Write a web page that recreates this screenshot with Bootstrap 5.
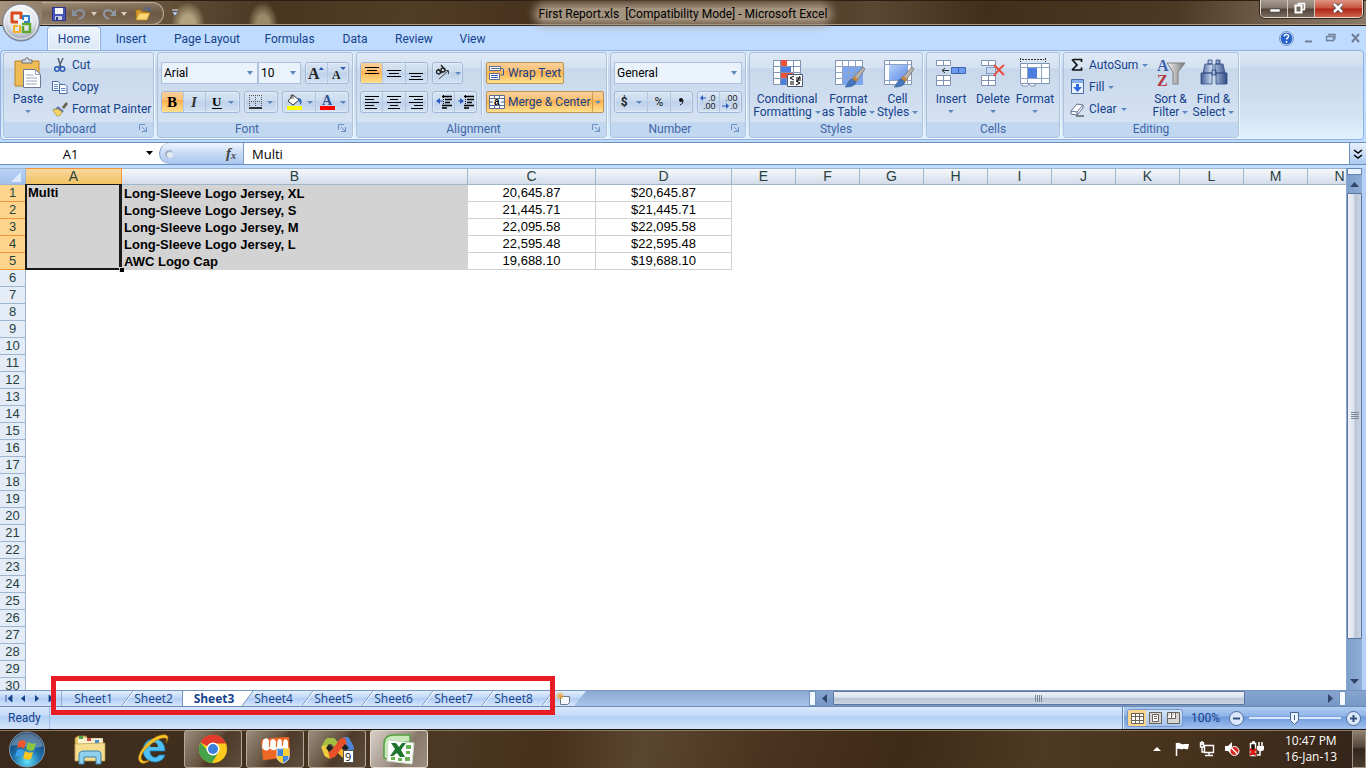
<!DOCTYPE html>
<html lang="en">
<head>
<meta charset="utf-8">
<meta name="viewport" content="width=device-width, initial-scale=1">
<title>First Report.xls [Compatibility Mode] - Microsoft Excel</title>
<link href="https://cdn.jsdelivr.net/npm/bootstrap@5.3.0/dist/css/bootstrap.min.css" rel="stylesheet">
<style>
:root{--ink:#15428b;--line:#9ebbde;--gold:linear-gradient(#f8cf9a 0,#fbc275 38%,#fdb04f 42%,#fee08c 100%)}
body{font:12px/16px Roboto,"Open Sans",sans-serif;color:var(--ink);background:#bfdbff;min-height:100vh;overflow:hidden}
button,select,input{font:inherit;color:inherit}
svg{display:block;flex:none}
.btn{--bs-btn-padding-x:0;--bs-btn-padding-y:0;--bs-btn-font-size:12px;--bs-btn-line-height:16px;--bs-btn-color:var(--ink);--bs-btn-border-width:0;--bs-btn-border-radius:2px;white-space:nowrap}
.caret{flex:none;width:0;height:0;border:3px solid transparent;border-top-color:#5c87bf;border-bottom:0}

/* title bar */
.titlebar{display:grid;grid-template-columns:1fr auto 1fr;height:26px;color:#000;border-bottom:1px solid #2a1c10;box-shadow:inset 0 -1px #a79a8b,inset 0 1px #2a1d12;
  background:radial-gradient(ellipse 17px 22px at 188px 24px,#c9b894cc 40%,transparent),radial-gradient(ellipse 15px 22px at 263px 24px,#b8a783bb 40%,transparent),linear-gradient(100deg,#a5937f 0,#7a634a 8%,#5e4a34 14%,#4a3520 20%,#523d26 30%,#46301c 41%,#4c3620 55%,#5a4631 64%,#432e1b 72%,#4d3823 86%,#766553 94%,#8a7a69 100%)}
.titlebar h1{font-size:12px;line-height:12px;font-weight:400;margin:8px 0 5px;white-space:pre;border-radius:8px;background:#a3937f;box-shadow:0 0 9px 5px #a3937f}
.quick{height:23px;margin:2px 0 0 42px;width:122px;padding:0 9px;border:1px solid #b9ab9b;border-left:0;border-radius:0 12px 12px 0;background:linear-gradient(#a8988680,#6d5b4780 50%,#8e7c6980)}
.orb{position:absolute;left:2px;top:3px;z-index:5}
.winbtns{height:18px;border:1px solid #e2d9d0;border-top:0;border-radius:0 0 5px 5px;overflow:hidden;margin-right:3px;box-shadow:0 0 0 1px #35261a}
.winbtns .btn{--bs-btn-border-radius:0;width:27px;height:17px;background:linear-gradient(#a89c90,#83756a 48%,#4f4136 52%,#76695d);border-right:1px solid #d3c8be}
.winbtns .close-win{width:47px;border-right:0;background:linear-gradient(#dc9685,#c9523c 48%,#ac2413 52%,#d0654d)}

/* ribbon */
.tabrow{height:24px;background:#bfdbff}
.tabrow .nav{padding-left:47px}
.tabrow .nav-link{color:var(--ink);font-size:12px;line-height:16px;padding:4px 0 0;height:22px;text-align:center;border:1px solid transparent;border-bottom:0;border-radius:4px 4px 0 0}
.tabrow .nav-link.active{height:24px;background:linear-gradient(#eef5fe,#dbe7f6);border-color:#8db2e3;box-shadow:inset 0 0 0 1px #f5faff}
.ribbon{height:90px;margin:0 2px 2px 0;padding:1px 2px;border:1px solid #8db2e3;border-radius:4px;background:linear-gradient(#dbe7f5 0,#d0deef 17%,#c5d6ea 19%,#d3e2f3 72%,#e0f2ff 100%)}
.rgroup{height:86px;border:1px solid #abc3df;border-radius:3px;margin-right:3px;flex:none;background:linear-gradient(#dfe9f6 0,#d5e2f1 17%,#c8d8eb 19%,#d5e2f2 82%);box-shadow:1px 1px #edf5fd;overflow:hidden}
.rbody{height:69px}
.rfoot{height:15px;line-height:15px;background:#c1d8f0;color:#4166a8;text-align:center;position:relative}
.rfoot .btn{position:absolute;right:4px;top:2px}
.rows{padding:9px 3px 0;gap:7px}
.stack{padding-top:1px}
.tools{height:22px;border:1px solid #9fb8d9;border-radius:3px;background:linear-gradient(#d9e5f3,#c9daee 45%,#bed1e9 50%,#d2e1f3);box-shadow:inset 0 0 0 1px #ffffff55}
.tools .btn{height:20px;flex:1 1 0;border-radius:0;display:flex;align-items:center;justify-content:center;gap:4px;border-right:1px solid #b1c6e1}
.tools .btn:last-child{border-right:0}
.tools .hot{background:var(--gold)}
.rule{width:2px;height:55px;margin-top:7px;background:linear-gradient(90deg,#a5bedd 50%,#eef5fc 50%)}
.goldbtn{height:22px;border:1px solid #b99456;border-radius:2px;background:var(--gold)}
.goldbtn .btn{height:20px;display:flex;align-items:center;gap:3px;padding:0 2px}
.combo{appearance:none;height:22px;border:1px solid #abc1de;border-radius:0;padding:0 0 0 2px;color:#000;background:#eaf2fb url("data:image/svg+xml,%3Csvg xmlns='http://www.w3.org/2000/svg' width='7' height='4'%3E%3Cpath d='M0 0h6L3 4z' fill='%235c87bf'/%3E%3C/svg%3E") no-repeat right 3px center}
.big{padding-top:4px;display:flex;flex-direction:column;align-items:center;line-height:13px!important}
.big svg{margin-bottom:4px}
.big .caret{margin-top:4px}
.big .lower{display:flex;align-items:center;gap:3px}
.big .lower .caret{margin:0}
.mini{height:22px;display:flex;align-items:center}

/* formula bar */
.fbar{height:23px;border:1px solid #6b8fbc;border-width:1px 0;background:#fff;color:#000;margin-bottom:3px}
.fbar input{border:0;outline:0;background:none;font:13px "Open Sans",sans-serif;padding:0;min-width:0}
.fxzone{width:85px;border:1px solid #7c9cc6;border-width:0 1px 0 1px;border-radius:12px 0 0 12px;background:linear-gradient(#f0f5fd,#c7daf5 50%,#a9c5ec)}
.expand{width:17px;border-left:1px solid #6b8fbc!important;border-radius:0!important;background:linear-gradient(#e6f0fd,#aecaf0)}

/* sheet */
.sheetarea{flex:1 1 0;min-height:0}
.gridwrap{flex:1 1 0;min-width:0;overflow:hidden;background:#fff}
.cells{table-layout:fixed;width:1372px;border-collapse:separate;border-spacing:0;font:13px/16px "Liberation Sans",Arial,sans-serif;color:#000}
.cells tr{height:17px}
.cells th,.cells td{padding:0;height:17px;overflow:hidden;white-space:nowrap}
.cells thead th{font-size:14px;font-weight:400;text-align:center;color:#27413e;background:linear-gradient(#f6f9fc,#d3dcea);border-right:1px solid #9eb6ce;border-bottom:1px solid #9eb6ce;border-top:1px solid #9eb6ce;line-height:15px}
.cells tbody th{font-weight:400;text-align:center;color:#27413e;background:#e4ecf7;border-right:1px solid #9eb6ce;border-bottom:1px solid #9eb6ce}
.cells thead th.picked{background:linear-gradient(#f9d99f,#f2c262);border-color:#f29536}
.cells tbody th.picked{background:#ffd58d;border-color:#f29536}
.cells thead th.corner{background:linear-gradient(#b9d1f4,#a3c0ea)}
.label-cell{background:#d3d3d3;font-weight:700;padding-left:2px!important}
.num{text-align:center;border-right:1px solid #d0d0d0;border-bottom:1px solid #d0d0d0}
.cursor-cell{position:relative;vertical-align:top;overflow:visible!important}
.cursor-cell::before{content:"";position:absolute;inset:-1px 0 0 -1px;border:solid #1a1a1a;border-width:1px 3px 2px 2px}
.cursor-cell::after{content:"";position:absolute;right:-2px;bottom:-2px;width:5px;height:5px;background:#000;border:1px solid #d3d3d3;border-width:1px 0 0 1px}
.vbar{width:20px;border-right:4px solid #b4d0f6;border-left:1px solid #88a8d4;background:linear-gradient(90deg,#7e9fcb,#8eaed6)}
.vbar .split{height:7px;background:#eaf3fe;border:1px solid #6685b0}
.vthumb{flex:446 1 0;border:1px solid #5a769e;border-radius:1px;background:linear-gradient(90deg,#eef2f7,#dbe2ec 45%,#b9c5d6 55%,#cbd6e3)}
.vrest{flex:34 1 0}

/* sheet tabs */
.bookbar{height:17px;border-top:1px solid #7795c0;border-bottom:1px solid #6c8ab4;position:relative;background:linear-gradient(#86a5d0,#7798c6);font-family:"Open Sans",sans-serif}
.bookleft{width:59.2%;background:linear-gradient(#8ca9d2,#a9c4eb)}
.steppers{width:62px;height:15px;background:linear-gradient(#e0edfd,#b6d0f4 50%,#cde0fa);border-right:1px solid #8fb0dc;gap:7px;padding-left:5px}
.stab{width:60px;height:15px;line-height:15px;padding-left:3px;text-align:center;color:var(--ink);text-decoration:none;background:url("data:image/svg+xml,%3Csvg xmlns='http://www.w3.org/2000/svg' width='12' height='15'%3E%3Cpath d='M0 15L11 0' stroke='%236f93c4' fill='none'/%3E%3Cpath d='M1 15L12 0' stroke='%23fff' fill='none'/%3E%3C/svg%3E") no-repeat left top,linear-gradient(#e3effe,#c0d8f8 45%,#b2cef4 50%,#d6e6fc)}
.stab.first{background:linear-gradient(#e3effe,#c0d8f8 45%,#b2cef4 50%,#d6e6fc)}
.stab.active{background:linear-gradient(#fff,#fff);font-weight:700;border-left:1px solid #6f93c4}
.stab.active+.stab{background:url("data:image/svg+xml,%3Csvg xmlns='http://www.w3.org/2000/svg' width='12' height='15'%3E%3Cpath d='M0 15L11 0H0z' fill='%23fff'/%3E%3Cpath d='M0 15L11 0' stroke='%236f93c4' fill='none'/%3E%3C/svg%3E") no-repeat left top,linear-gradient(#e3effe,#c0d8f8 45%,#b2cef4 50%,#d6e6fc)}
.newtab{width:44px;height:15px;border:0;padding:0 0 0 14px;clip-path:polygon(0 0,100% 0,32px 100%,0 100%)}
.marquee{position:absolute;left:51px;top:-15px;width:504px;height:39px;border:5px solid #e81c24;pointer-events:none;z-index:4}
.splitter{width:7px;height:15px;background:#f4f9ff;border:1px solid #7191bf}
.hthumb{width:84.3%;height:14px;border:1px solid #5a769e;border-radius:1px;background:linear-gradient(#eef2f7,#dbe2ec 45%,#b9c5d6 52%,#cbd6e3)}

/* status bar */
.status{height:22px;background:linear-gradient(#d9e8fc,#c3daf9 38%,#b2cff5 42%,#d5e5fb)}
.ready{border-right:1px solid #9dbbe3}
.statusright{width:244px;border-left:1px solid #5d83b7;box-shadow:inset 1px 0 #e5f0ff;background:linear-gradient(#b0ccf2,#8fb4e9 40%,#6f9bdc 46%,#a1c1ee)}
.views{height:18px;border:1px solid #7396c6;border-radius:3px;overflow:hidden;background:linear-gradient(#d5e4f8,#a9c5ee)}
.views .btn{width:18px;height:16px;border-radius:0;display:flex;align-items:center;justify-content:center}
.views .hot{background:#fbd58b}
.zoomer{appearance:none;background:linear-gradient(#d8e7fb,#d8e7fb) center/100% 2px no-repeat;height:14px;flex:1 1 0;min-width:0;margin:0}
.zoomer::-webkit-slider-thumb{appearance:none;width:9px;height:13px;background:url("data:image/svg+xml,%3Csvg xmlns='http://www.w3.org/2000/svg' width='9' height='13'%3E%3Cpath d='M.5 .5h8v8l-4 4-4-4z' fill='%23eaf2fd' stroke='%2344648f'/%3E%3Cpath d='M4.500 3v5' stroke='%2344648f'/%3E%3C/svg%3E")}

/* taskbar */
.taskbar{height:39px;color:#fff;border-top:1px solid #16100a;background:linear-gradient(100deg,#3b2a1b 0,#45321f 22%,#4c3823 33%,#463019 40%,#5b4630 47%,#4a341f 56%,#3f2a17 66%,#4e3922 76%,#46311c 88%,#33241a 100%);box-shadow:inset 0 1px #8b7b68}
.launch{width:62px;height:38px;display:flex;align-items:center;justify-content:center}
.start{width:54px}
.pinned{width:63px}
.running{width:58px;margin-right:4px;border:1px solid #b6a898!important;border-radius:3px!important;background:linear-gradient(125deg,#9b8c7e 0,#65533f 45%,#4d3a28 55%,#5f4d3b)}
.running.front{background:linear-gradient(125deg,#d7cfc7 0,#a19386 50%,#877869 60%,#9d8f82);border-color:#e3dbd2!important}
.tray{gap:9px}
.clock{font-family:"Open Sans",sans-serif;padding:0 6px 0 12px}
.peek{width:14px;height:38px;border:1px solid #a09181!important;border-radius:0!important;background:linear-gradient(#8e7f70,#54443a 45%,#33261c 50%,#4a3b2e)}
</style>
</head>
<body class="d-flex flex-column">

<svg width="0" height="0" class="position-absolute" aria-hidden="true">
  <defs>
    <radialGradient id="orbFill" cx=".5" cy=".3" r=".7"><stop offset="0" stop-color="#fff"/><stop offset=".6" stop-color="#dfe3e9"/><stop offset="1" stop-color="#8f9aab"/></radialGradient>
    <radialGradient id="winFill" cx=".5" cy=".85" r=".8"><stop offset="0" stop-color="#62e0f7"/><stop offset=".5" stop-color="#1d70ac"/><stop offset="1" stop-color="#153b66"/></radialGradient>
    <linearGradient id="steel" x1="0" x2="1"><stop offset="0" stop-color="#f4f4f4"/><stop offset="1" stop-color="#777"/></linearGradient>
    <linearGradient id="bino" x1="0" x2="1"><stop offset="0" stop-color="#3d5a94"/><stop offset=".4" stop-color="#c9d7f1"/><stop offset="1" stop-color="#2f4a82"/></linearGradient>
    <linearGradient id="sky" x2="1" y2="1"><stop offset="0" stop-color="#b7d0fa"/><stop offset="1" stop-color="#5f8ee6"/></linearGradient>
    <g id="brush"><path d="M29 8l2 2-9 13-4-3z" fill="#b8b4b0" stroke="#6c6460" stroke-width=".7"/><path d="M20 17l4 3-2 3-4-3z" fill="#c8873f"/><path d="M18 20l4 3c-1 4-5 5-11 5 3-2 3-7 7-8z" fill="#4577bd" stroke="#2f5894" stroke-width=".6"/></g>
    <g id="launcher"><path d="M.5 6V.5H6" fill="none" stroke="#6d90c2"/><path d="M7.500 3v4.500H3M3 3l4 4" fill="none" stroke="#6d90c2"/></g>
  </defs>
</svg>

<header class="titlebar position-relative">
  <div class="d-flex">
    <button class="btn orb" aria-label="Office menu">
      <svg width="38" height="39" viewBox="0 0 38 39"><circle cx="19" cy="19.500" r="18.500" fill="url(#orbFill)" stroke="#6f7988"/><circle cx="19" cy="19.500" r="16.500" fill="none" stroke="#fff" stroke-opacity=".8"/>
        <g fill="none" stroke-width="3" stroke-linejoin="round"><path d="M16 19H10V10h9v6" stroke="#d94a1c"/><path d="M21 17v-4h6v6h-5" stroke="#2e7fd0" stroke-width="2"/><path d="M18 22v7h-6v-6h4" stroke="#f1b21b" stroke-width="2"/><path d="M20 21h8v8h-7v-6" stroke="#5fa62d" stroke-width="2.500"/></g></svg>
    </button>
    <div class="quick d-flex align-items-center">
      <button class="btn" aria-label="Save"><svg width="16" height="16" viewBox="0 0 16 16"><path d="M1.500 1.500h13v13h-13z" fill="#4a54b6" stroke="#2c3486"/><path d="M4 2h8v6H4z" fill="#f3f5fb"/><path d="M4 10h7v4H4z" fill="#c4cbe2"/><path d="M5 11h2v3H5z" fill="#2c3486"/></svg></button>
      <button class="btn ms-1" aria-label="Undo"><svg width="16" height="16" viewBox="0 0 16 16"><path d="M3 8c3-5 10-5 10 0 0 3-2 4-5 5" fill="none" stroke="#8793a5" stroke-width="2"/><path d="M1 3v7h6z" fill="#8793a5"/></svg></button>
      <svg class="ms-1" width="6" height="4"><path d="M0 0h6L3 4z" fill="#d6cdc4"/></svg>
      <button class="btn ms-1" aria-label="Redo"><svg width="16" height="16" viewBox="0 0 16 16"><path d="M13 8C10 3 3 3 3 8c0 3 2 4 5 5" fill="none" stroke="#8f99a8" stroke-width="2"/><path d="M15 3v7H9z" fill="#8f99a8"/></svg></button>
      <svg class="ms-1" width="6" height="4"><path d="M0 0h6L3 4z" fill="#d6cdc4"/></svg>
      <button class="btn ms-2" aria-label="Open"><svg width="16" height="16" viewBox="0 0 16 16"><path d="M1 14V4h5l1 2h6v3" fill="#d99b2c" stroke="#9d6c14" stroke-width=".8"/><path d="M1 14l3-7h11l-3 7z" fill="#fbd873" stroke="#b98520" stroke-width=".8"/><path d="M9 3c2-2 4-1 5 1m1-3v3.500h-3.500" fill="none" stroke="#3c68ad"/></svg></button>
    </div>
    <button class="btn ms-2 align-self-center" aria-label="Customize quick access"><svg width="6" height="7"><path d="M0 1h6" stroke="#dfe6f2"/><path d="M0 3h6L3 7z" fill="#cfdcf0" stroke="#28416d" stroke-width=".5"/></svg></button>
  </div>
  <h1>First Report.xls  [Compatibility Mode] - Microsoft Excel</h1>
  <div class="d-flex justify-content-end">
    <div class="winbtns d-flex">
      <button class="btn" aria-label="Minimize"><svg width="27" height="17"><path d="M9 9h10v3H9z" fill="#fff" stroke="#444" stroke-width=".6"/></svg></button>
      <button class="btn" aria-label="Restore"><svg width="26" height="17"><path d="M10.500 3.500h6v6h-6z" fill="none" stroke="#fff" stroke-width="1.500"/><path d="M7.500 5.500h6v7h-6z" fill="#73665b" stroke="#fff" stroke-width="2"/></svg></button>
      <button class="btn close-win" aria-label="Close"><svg width="46" height="17"><path d="M19 4l8 8M27 4l-8 8" stroke="#444" stroke-width="4"/><path d="M19 4l8 8M27 4l-8 8" stroke="#fff" stroke-width="2.500"/></svg></button>
    </div>
  </div>
</header>

<div class="tabrow d-flex justify-content-between">
  <ul class="nav flex-nowrap">
    <li class="nav-item"><a class="nav-link active" href="#" style="width:54px">Home</a></li>
    <li class="nav-item"><a class="nav-link" href="#" style="width:60px">Insert</a></li>
    <li class="nav-item"><a class="nav-link" href="#" style="width:92px">Page Layout</a></li>
    <li class="nav-item"><a class="nav-link" href="#" style="width:73px">Formulas</a></li>
    <li class="nav-item"><a class="nav-link" href="#" style="width:58px">Data</a></li>
    <li class="nav-item"><a class="nav-link" href="#" style="width:60px">Review</a></li>
    <li class="nav-item"><a class="nav-link" href="#" style="width:57px">View</a></li>
  </ul>
  <div class="d-flex align-items-center gap-2">
    <button class="btn" aria-label="Help"><svg width="15" height="15"><circle cx="7.500" cy="7.500" r="6.500" fill="#2a63c8" stroke="#f4f8ff"/><circle cx="7.500" cy="7.500" r="7" fill="none" stroke="#4a6fae" stroke-width=".7"/><path d="M5.200 5.500c0-3 4.800-2.500 4.400 0-.2 1.300-2.100 1.500-2.100 3M7.500 10v1.700" fill="none" stroke="#fff" stroke-width="1.500"/></svg></button>
    <button class="btn" aria-label="Minimize workbook"><svg width="14" height="14"><path d="M3 10.500h7" stroke="#6f7f98" stroke-width="2"/></svg></button>
    <button class="btn" aria-label="Restore workbook"><svg width="14" height="14"><path d="M4 3.500h7v5M2.500 5.500h7v4h-7zM2 5.500h8" fill="none" stroke="#6f7f98" stroke-width="1.300"/></svg></button>
    <button class="btn px-1" aria-label="Close workbook"><svg width="12" height="14"><path d="M2 3l7 8M9 3l-7 8" stroke="#6f7f98" stroke-width="2"/></svg></button>
  </div>
</div>

<div class="ribbon d-flex">
  <section class="rgroup" style="width:151px">
    <div class="rbody d-flex">
      <button class="btn big" style="width:48px">
        <svg width="30" height="32" viewBox="0 0 30 32"><path d="M2 4h24v25H2z" fill="#eebb55" stroke="#b9852b"/><path d="M9 6V3h3c0-3 4-3 4 0h3v3z" fill="#d6dbe2" stroke="#666c77"/><path d="M10.500 12.500h12l5 5v13h-17z" fill="#fff" stroke="#6c7a94"/><path d="M22.500 12.500v5h5M13 18h7M13 21h11M13 24h11M13 27h11" fill="none" stroke="#9aa8c0"/></svg>
        Paste<span class="caret"></span>
      </button>
      <div class="stack d-flex flex-column align-items-start">
        <button class="btn mini gap-1"><svg width="16" height="16" viewBox="0 0 16 16"><path d="M6 1l3 9M11 1L7 10" stroke="#56637a" stroke-width="1.500"/><circle cx="5" cy="12" r="2.300" fill="none" stroke="#2d5bb2" stroke-width="1.500"/><circle cx="10.500" cy="12" r="2.300" fill="none" stroke="#2d5bb2" stroke-width="1.500"/></svg>Cut</button>
        <button class="btn mini gap-1"><svg width="16" height="16" viewBox="0 0 16 16"><path d="M.5 2.500H6l2 2v7H.5z" fill="#fff" stroke="#4a6aa5"/><path d="M7.500 5.500H13l2 2v7H7.500z" fill="#fff" stroke="#4a6aa5"/><path d="M2 5.500h4M2 7.500h4M2 9.500h4M9 9.500h4.500M9 11.500h4.500" stroke="#5e88d0"/></svg>Copy</button>
        <button class="btn mini gap-1"><svg width="16" height="16" viewBox="0 0 16 16"><path d="M10 6l4-5 2 2-4 5z" fill="#6a6152"/><path d="M6 5l6 5-2 2-7-4z" fill="#6b7cb2"/><path d="M1 8c2 1 5 0 5 0l4 3c-1 3-3 4-5 4-1-2-4-4-4-7z" fill="#f2d66a" stroke="#a98a2c" stroke-width=".7"/></svg>Format Painter</button>
      </div>
    </div>
    <div class="rfoot pe-3">Clipboard<button class="btn" aria-label="Clipboard options"><svg width="10" height="10"><use href="#launcher"/></svg></button></div>
  </section>

  <section class="rgroup" style="width:196px">
    <div class="rbody rows d-flex flex-column">
      <div class="d-flex">
        <select class="combo" style="width:97px" aria-label="Font"><option>Arial</option></select>
        <select class="combo me-1" style="width:43px" aria-label="Font size"><option>10</option></select>
        <div class="tools d-flex flex-fill">
          <button class="btn" aria-label="Grow font"><svg width="18" height="16" viewBox="0 0 18 16" font-family="Liberation Serif,serif" font-weight="700" fill="#222"><text x="1" y="14" font-size="16">A</text><path d="M12 5l2-3 3 3z" fill="#2d5bb2"/></svg></button>
          <button class="btn" aria-label="Shrink font"><svg width="18" height="16" viewBox="0 0 18 16" font-family="Liberation Serif,serif" font-weight="700" fill="#222"><text x="3" y="14" font-size="12">A</text><path d="M11 2h6l-3 3z" fill="#2d5bb2"/></svg></button>
        </div>
      </div>
      <div class="d-flex gap-1">
        <div class="tools d-flex" style="width:79px">
          <button class="btn hot" aria-label="Bold"><svg width="14" height="16" font-family="Liberation Serif,serif" font-size="15" font-weight="700"><text x="2" y="13">B</text></svg></button>
          <button class="btn" aria-label="Italic"><svg width="14" height="16" font-family="Liberation Serif,serif" font-size="15" font-weight="700" font-style="italic" fill="#333"><text x="4" y="13">I</text></svg></button>
          <button class="btn" style="flex-grow:1.6" aria-label="Underline"><svg width="14" height="16" font-family="Liberation Serif,serif" font-size="13" font-weight="700"><text x="2" y="12">U</text><path d="M2 14.500h10" stroke="#000"/></svg><span class="caret"></span></button>
        </div>
        <div class="tools d-flex" style="width:34px"><button class="btn" aria-label="Borders"><svg width="14" height="14"><path d="M.5 0v12M12.500 0v12M6.500 0v12M0 .5h13M0 6.500h13" stroke="#555" stroke-dasharray="1 1"/><path d="M0 13h13" stroke="#000" stroke-width="1.500"/></svg><span class="caret"></span></button></div>
        <div class="tools d-flex flex-fill">
          <button class="btn" aria-label="Fill color"><svg width="17" height="16" viewBox="0 0 17 16"><path d="M7 1l6 5-6 5-5-4z" fill="#fff" stroke="#333"/><path d="M5 5V1h2v4" fill="none" stroke="#555"/><path d="M12 4c4 0 4 3 3 7-2-2-1-4-3-5z" fill="#3567b8"/><path d="M1 12h15v4H1z" fill="#ff0"/></svg><span class="caret"></span></button>
          <button class="btn" aria-label="Font color"><svg width="17" height="16" viewBox="0 0 17 16"><text x="3" y="11" font-family="Liberation Serif,serif" font-size="14" font-weight="700" fill="#2d4f92">A</text><path d="M1 12h15v4H1z" fill="#f00"/></svg><span class="caret"></span></button>
        </div>
      </div>
    </div>
    <div class="rfoot pe-3">Font<button class="btn" aria-label="Font options"><svg width="10" height="10"><use href="#launcher"/></svg></button></div>
  </section>

  <section class="rgroup" style="width:251px">
    <div class="rbody d-flex">
      <div class="rows d-flex flex-column" style="width:124px">
        <div class="d-flex gap-1">
          <div class="tools d-flex" style="width:68px">
            <button class="btn hot" aria-label="Top align"><svg width="14" height="16"><path d="M0 2.500h14M2 5.500h10M0 8.500h14" stroke="#000"/></svg></button>
            <button class="btn" aria-label="Middle align"><svg width="14" height="16"><path d="M0 5.500h14M2 8.500h10M0 11.500h14" stroke="#000"/></svg></button>
            <button class="btn" aria-label="Bottom align"><svg width="14" height="16"><path d="M0 8.500h14M2 11.500h10M0 14.500h14" stroke="#000"/></svg></button>
          </div>
          <div class="tools d-flex" style="width:31px"><button class="btn" aria-label="Orientation"><svg width="17" height="18"><g fill="none" stroke="#222" stroke-width="1.300"><circle cx="4.500" cy="8" r="2"/><path d="M4 5l4 4"/><circle cx="9" cy="6" r="2"/><path d="M7 1l4 5"/></g><path d="M5 15l9-8M14.500 10V6.500H11" fill="none" stroke="#444"/></svg><span class="caret"></span></button></div>
        </div>
        <div class="d-flex gap-1">
          <div class="tools d-flex" style="width:68px">
            <button class="btn" aria-label="Align left"><svg width="14" height="14"><path d="M0 1.500h14M0 4.500h9M0 7.500h14M0 10.500h9M0 13.500h12" stroke="#000"/></svg></button>
            <button class="btn" aria-label="Center"><svg width="14" height="14"><path d="M0 1.500h14M3 4.500h8M0 7.500h14M3 10.500h8M1 13.500h12" stroke="#000"/></svg></button>
            <button class="btn" aria-label="Align right"><svg width="14" height="14"><path d="M0 1.500h14M5 4.500h9M0 7.500h14M5 10.500h9M2 13.500h12" stroke="#000"/></svg></button>
          </div>
          <div class="tools d-flex" style="width:45px">
            <button class="btn" aria-label="Decrease indent"><svg width="16" height="14"><path d="M6 1.500h10M9 4.500h7M9 7.500h5M6 10.500h10M6 13h5" stroke="#000" stroke-width="1.500"/><path d="M7.500 0v14" stroke="#000" stroke-dasharray="1 1"/><path d="M0 6l4-3v6z" fill="#2d5bc2"/><path d="M4 6h3" stroke="#2d5bc2"/></svg></button>
            <button class="btn" aria-label="Increase indent"><svg width="16" height="14"><path d="M6 1.500h10M9 4.500h7M9 7.500h5M6 10.500h10M6 13h5" stroke="#000" stroke-width="1.500"/><path d="M7.500 0v14" stroke="#000" stroke-dasharray="1 1"/><path d="M6 6L2 3v6z" fill="#2d5bc2"/><path d="M0 6h3" stroke="#2d5bc2"/></svg></button>
          </div>
        </div>
      </div>
      <div class="rule"></div>
      <div class="rows d-flex flex-column align-items-start pe-0">
        <div class="goldbtn"><button class="btn"><svg width="16" height="16"><path d="M.5 1.500h11v4H.5zM2 3.500h12M.5 8.500h10v6H.5z" fill="#fff" stroke="#5d6f91"/><path d="M2 10.500h7M2 12.500h7M14.500 4v6h-3" stroke="#2d5bb2" fill="none"/></svg>Wrap Text</button></div>
        <div class="goldbtn d-flex"><button class="btn"><svg width="16" height="16"><path d="M.5 1.500h15v13H.5zM0 4.500h16M0 11.500h16M5.500 1v3M10.500 1v3M5.500 12v3M10.500 12v3" fill="#fff" stroke="#5d6f91"/><path d="M1 8h3M12 8h3" stroke="#2d5bb2"/><text x="5" y="11" font-family="Liberation Sans,sans-serif" font-size="10" font-weight="700">a</text></svg>Merge &amp; Center</button><button class="btn" style="border-left:1px solid #c99a4c" aria-label="Merge options"><span class="caret"></span></button></div>
      </div>
    </div>
    <div class="rfoot pe-3">Alignment<button class="btn" aria-label="Alignment options"><svg width="10" height="10"><use href="#launcher"/></svg></button></div>
  </section>

  <section class="rgroup" style="width:136px">
    <div class="rbody rows d-flex flex-column">
      <select class="combo w-100" aria-label="Number format"><option>General</option></select>
      <div class="d-flex gap-1">
        <div class="tools d-flex" style="width:79px">
          <button class="btn fw-bold text-dark" style="flex-grow:1.5;gap:8px" aria-label="Currency">$<span class="caret"></span></button>
          <button class="btn text-dark">%</button>
          <button class="btn" aria-label="Comma style"><svg width="6" height="10"><circle cx="3" cy="3" r="2" fill="#111"/><path d="M5 3c0 3-1 4-3 5" stroke="#111" fill="none"/></svg></button>
        </div>
        <div class="tools d-flex flex-fill">
          <button class="btn" aria-label="Increase decimal"><svg width="17" height="16" font-family="Liberation Sans,sans-serif" font-size="9" fill="#222"><text x="8" y="7">.0</text><text x="3" y="15">.00</text><path d="M0 4l3-3v6z" fill="#2d5bc2"/><path d="M3 4h3" stroke="#2d5bc2"/></svg></button>
          <button class="btn" aria-label="Decrease decimal"><svg width="17" height="16" font-family="Liberation Sans,sans-serif" font-size="9" fill="#222"><text x="3" y="7">.00</text><text x="8" y="15">.0</text><path d="M7 12L4 9v6z" fill="#2d5bc2"/><path d="M0 12h4" stroke="#2d5bc2"/></svg></button>
        </div>
      </div>
    </div>
    <div class="rfoot pe-3">Number<button class="btn" aria-label="Number options"><svg width="10" height="10"><use href="#launcher"/></svg></button></div>
  </section>

  <section class="rgroup" style="width:174px">
    <div class="rbody d-flex justify-content-center">
      <button class="btn big" style="width:68px">
        <svg width="32" height="32"><path d="M2.500 3.500h27v24h-27z" fill="#fff" stroke="#8093b5"/><path d="M2 9.500h28M2 15.500h28M2 21.500h28M9.500 3v25M15.500 3v25M22.500 3v25" stroke="#8093b5"/><path d="M10 3h6v6h-6zM10 16h12v5H10z" fill="#ec5139"/><path d="M10 10h10v5H10zM10 22h5v6h-5z" fill="#4c7ee0"/><path d="M16.500 17.500h15v12h-15z" fill="#fff" stroke="#4a5872"/><path d="M23 19l-4 2 4 2M19 25h4M19 27h4M25 21h5M25 23h5M29 19l-3 6M25 24l4 2-4 2" fill="none" stroke="#000"/></svg>
        <span>Conditional</span><span class="lower">Formatting<span class="caret"></span></span>
      </button>
      <button class="btn big" style="width:55px">
        <svg width="32" height="32"><path d="M2.500 3.500h27v24h-27z" fill="#fff" stroke="#8093b5"/><path d="M10 9h20v19H10z" fill="#7ba6f0"/><path d="M2 9.500h28M2 15.500h28M2 21.500h28M9.500 3v25M15.500 3v25M22.500 3v25" stroke="#8fa3c6"/><use href="#brush" x="1" y="2"/></svg>
        <span>Format</span><span class="lower">as Table<span class="caret"></span></span>
      </button>
      <button class="btn big" style="width:43px">
        <svg width="32" height="32"><path d="M2.500 3.500h27v24h-27z" fill="#fff" stroke="#8093b5"/><path d="M2 7.500h28M2 23.500h28M7.500 3v25M25.500 3v25" stroke="#8fa3c6"/><path d="M7 8h18v15H7z" fill="url(#sky)"/><use href="#brush" x="1" y="2"/></svg>
        <span>Cell</span><span class="lower">Styles<span class="caret"></span></span>
      </button>
    </div>
    <div class="rfoot">Styles</div>
  </section>

  <section class="rgroup" style="width:134px">
    <div class="rbody d-flex justify-content-center">
      <button class="btn big" style="width:42px"><svg width="32" height="32"><path d="M1.500 3.500h14v5h-14zM8.500 3v6M1.500 18.500h14v10h-14zM8.500 18v11M1 23.500h15" fill="#fff" stroke="#8093b5"/><path d="M16.500 10.500h14v6h-14z" fill="#6b9af0" stroke="#3f65ad"/><path d="M23.500 10v7" stroke="#3f65ad"/><path d="M8 13.500h6M10 11l-3 2.500 3 2.500" fill="none" stroke="#333"/></svg>Insert<span class="caret"></span></button>
      <button class="btn big" style="width:42px"><svg width="32" height="32"><path d="M4.500 3.500h14v5h-14zM11.500 3v6M4.500 18.500h14v10h-14zM11.500 18v11M4 23.500h15" fill="#fff" stroke="#8093b5"/><path d="M9.500 10.500h9v6h-9z" fill="none" stroke="#3f65ad" stroke-dasharray="1 1"/><path d="M17 8l10 10M27 8c-4 3-7 6-10 11" stroke="#ea4a3c" stroke-width="2" fill="none"/></svg>Delete<span class="caret"></span></button>
      <button class="btn big" style="width:42px"><svg width="32" height="32"><path d="M1.500 6.500h29v20h-29z" fill="#fff" stroke="#8093b5"/><path d="M1 10.500h30M1 21.500h30M8.500 6v21M22.500 6v21" stroke="#8fa3c6"/><path d="M9 11h9v10H9z" fill="#4c7ee0"/><path d="M1.500 1v4M26.500 1v4M3 2.500h22" stroke="#333" stroke-dasharray="2 1"/><path d="M3 27v2h5l2-2 2 2h4v-2" fill="#fff" stroke="#8093b5"/></svg>Format<span class="caret"></span></button>
    </div>
    <div class="rfoot">Cells</div>
  </section>

  <section class="rgroup" style="width:176px">
    <div class="rbody d-flex">
      <div class="stack ps-1 d-flex flex-column align-items-start" style="width:85px">
        <button class="btn mini gap-1"><svg width="17" height="16"><path d="M5 2.500h8.500V5M4 2.500l5 5.500-5 5M4 13h9.500v-2.500" fill="none" stroke="#111" stroke-width="1.700"/></svg>AutoSum<span class="caret"></span></button>
        <button class="btn mini gap-1"><svg width="17" height="16"><path d="M3.500.5h12v14h-12z" fill="#e9f1fc" stroke="#4a6aa5"/><path d="M4 1h11v3H4z" fill="#86aff0"/><path d="M8 5h3v3h3l-4.500 5L5 8h3z" fill="#2f6be0"/></svg>Fill<span class="caret"></span></button>
        <button class="btn mini gap-1"><svg width="17" height="16"><path d="M3 10l6-7 6 1v3l-6 7-6-1z" fill="#fff" stroke="#5d6f91"/><path d="M3 10l6 1 6-7M9 11v3" fill="none" stroke="#5d6f91"/><path d="M8 15h8" stroke="#222"/></svg>Clear<span class="caret"></span></button>
      </div>
      <button class="btn big" style="width:43px"><svg width="32" height="32" font-family="Liberation Serif,serif" font-weight="700"><text x="2" y="14" font-size="16" fill="#3c5fae">A</text><text x="2" y="29" font-size="16" fill="#b03a42">Z</text><path d="M12 6h18l-7 9v12h-5V15z" fill="url(#steel)" stroke="#808080"/></svg><span>Sort &amp;</span><span class="lower">Filter<span class="caret"></span></span></button>
      <button class="btn big" style="width:43px"><svg width="32" height="32"><g fill="url(#bino)" stroke="#2f4a82" stroke-width=".8"><path d="M10 3h4v4h-4zM18 3h4v4h-4zM7 7h8v9H5zM17 7h8l2 9H17zM3 16h11v11H3zM18 16h11v11H18z"/><path d="M14 13h4v5h-4z"/></g></svg><span>Find &amp;</span><span class="lower">Select<span class="caret"></span></span></button>
    </div>
    <div class="rfoot">Editing</div>
  </section>
</div>

<div class="fbar d-flex">
  <input value="A1" aria-label="Name box" class="text-center" style="width:141px">
  <button class="btn px-1" aria-label="Names"><svg width="10" height="5"><path d="M1 0h7L4.500 4z" fill="#000"/></svg></button>
  <div class="fxzone d-flex align-items-center justify-content-between ps-1 pe-1 flex-shrink-0">
    <svg width="10" height="12"><circle cx="5" cy="6" r="4" fill="#a8b4c8"/><circle cx="6" cy="7" r="3" fill="#e4ebf5"/></svg>
    <button class="btn" aria-label="Insert function"><svg width="16" height="16" font-family="Liberation Serif,serif" font-style="italic" font-weight="700" fill="#444"><text x="3" y="12" font-size="15">f</text><text x="8" y="13" font-size="10">x</text></svg></button>
  </div>
  <input class="flex-grow-1 ps-2" value="Multi" aria-label="Formula">
  <button class="btn expand" aria-label="Expand formula bar"><svg width="16" height="16"><path d="M4 4l4 3 4-3M4 9l4 3 4-3" fill="none" stroke="#000" stroke-width="1.500"/></svg></button>
</div>

<main class="sheetarea d-flex">
  <div class="gridwrap">
    <table class="cells">
      <colgroup><col style="width:26px"><col style="width:96px"><col style="width:346px"><col style="width:128px"><col style="width:136px"><col span="10" style="width:64px"></colgroup>
      <thead><tr><th class="corner" aria-label="Select all"><svg width="25" height="15"><path d="M21 3v10H11z" fill="#dfeafa"/></svg></th><th class="picked">A</th><th>B</th><th>C</th><th>D</th><th>E</th><th>F</th><th>G</th><th>H</th><th>I</th><th>J</th><th>K</th><th>L</th><th>M</th><th>N</th></tr></thead>
      <tbody>
        <tr><th class="picked">1</th><td rowspan="5" class="label-cell cursor-cell">Multi</td><td class="label-cell">Long-Sleeve Logo Jersey, XL</td><td class="num">20,645.87</td><td class="num">$20,645.87</td></tr>
        <tr><th class="picked">2</th><td class="label-cell">Long-Sleeve Logo Jersey, S</td><td class="num">21,445.71</td><td class="num">$21,445.71</td></tr>
        <tr><th class="picked">3</th><td class="label-cell">Long-Sleeve Logo Jersey, M</td><td class="num">22,095.58</td><td class="num">$22,095.58</td></tr>
        <tr><th class="picked">4</th><td class="label-cell">Long-Sleeve Logo Jersey, L</td><td class="num">22,595.48</td><td class="num">$22,595.48</td></tr>
        <tr><th class="picked">5</th><td class="label-cell">AWC Logo Cap</td><td class="num">19,688.10</td><td class="num">$19,688.10</td></tr>
        <tr><th>6</th></tr><tr><th>7</th></tr><tr><th>8</th></tr><tr><th>9</th></tr><tr><th>10</th></tr>
        <tr><th>11</th></tr><tr><th>12</th></tr><tr><th>13</th></tr><tr><th>14</th></tr><tr><th>15</th></tr>
        <tr><th>16</th></tr><tr><th>17</th></tr><tr><th>18</th></tr><tr><th>19</th></tr><tr><th>20</th></tr>
        <tr><th>21</th></tr><tr><th>22</th></tr><tr><th>23</th></tr><tr><th>24</th></tr><tr><th>25</th></tr>
        <tr><th>26</th></tr><tr><th>27</th></tr><tr><th>28</th></tr><tr><th>29</th></tr><tr><th>30</th></tr>
      </tbody>
    </table>
  </div>
  <div class="vbar d-flex flex-column">
    <div class="split flex-shrink-0"></div>
    <svg width="15" height="18"><path d="M3 12h9L7.500 7z" fill="#34456a"/></svg>
    <div class="vthumb d-flex align-items-center justify-content-center"><svg width="8" height="8"><path d="M0 .5h8M0 2.500h8M0 4.500h8M0 6.500h8" stroke="#7c8798"/></svg></div>
    <div class="vrest"></div>
    <svg width="15" height="17"><path d="M3 6h9l-4.500 5z" fill="#34456a"/></svg>
  </div>
</main>

<div class="bookbar d-flex">
  <div class="bookleft d-flex">
    <div class="steppers d-flex align-items-center flex-shrink-0">
      <button class="btn" aria-label="First sheet"><svg width="8" height="9"><path d="M1 1v7M7 1v7L3 4.500z" stroke="#15428b" fill="#15428b" stroke-width=".8"/></svg></button>
      <button class="btn" aria-label="Previous sheet"><svg width="7" height="9"><path d="M5 1v7L1 4.500z" fill="#15428b"/></svg></button>
      <button class="btn" aria-label="Next sheet"><svg width="7" height="9"><path d="M1 1v7l4-3.500z" fill="#15428b"/></svg></button>
      <button class="btn" aria-label="Last sheet"><svg width="8" height="9"><path d="M7 1v7M1 1v7l4-3.500z" stroke="#15428b" fill="#15428b" stroke-width=".8"/></svg></button>
    </div>
    <nav class="d-flex flex-shrink-0" aria-label="Sheets">
      <a class="stab first" href="#">Sheet1</a><a class="stab" href="#">Sheet2</a><a class="stab active" href="#">Sheet3</a><a class="stab" href="#">Sheet4</a><a class="stab" href="#">Sheet5</a><a class="stab" href="#">Sheet6</a><a class="stab" href="#">Sheet7</a><a class="stab" href="#">Sheet8</a>
    </nav>
    <button class="stab newtab" aria-label="Insert worksheet"><svg width="15" height="14"><path d="M4.500 4.500h9v6l-2 2h-7z" fill="#f5f8fc" stroke="#6b7689"/><path d="M4 0v8M0 4h8M1 1l6 6M7 1L1 7" stroke="#f3a32a"/></svg></button>
  </div>
  <div class="splitter"></div>
  <svg width="17" height="15"><path d="M11 3v9L6 7.500z" fill="#34456a"/></svg>
  <div class="flex-grow-1"><div class="hthumb d-flex align-items-center justify-content-center"><svg width="8" height="7"><path d="M.5 0v7M2.500 0v7M4.500 0v7M6.500 0v7" stroke="#7c8798"/></svg></div></div>
  <svg width="17" height="15"><path d="M6 3v9l5-4.500z" fill="#34456a"/></svg>
  <div class="splitter me-3"></div>
  <div class="pe-1"></div>
  <div class="marquee"></div>
</div>

<div class="status d-flex justify-content-between">
  <div class="ready d-flex align-items-center ps-2 pe-2">Ready</div>
  <div class="statusright d-flex align-items-center ps-1 gap-1 pe-1">
    <div class="views d-flex">
      <button class="btn hot" aria-label="Normal view"><svg width="13" height="11"><path d="M.5.5h12v10H.5zM0 3.500h13M0 7.500h13M4.500 0v11M8.500 0v11" fill="#fff" stroke="#6a6355"/></svg></button>
      <button class="btn" aria-label="Page layout view"><svg width="13" height="12"><path d="M.5.5h12v11H.5z" fill="#d5d5d5" stroke="#67625a"/><path d="M3.500 2.500h6v7h-6zM5 4.500h3M5 6.500h3" fill="#fff" stroke="#67625a"/></svg></button>
      <button class="btn" aria-label="Page break preview"><svg width="13" height="12"><path d="M.5.5h12v11H.5z" fill="#d5d5d5" stroke="#67625a"/><path d="M4.500 0v6.500H0M8.500 0v6.500h-4" fill="#fff" stroke="#67625a"/></svg></button>
    </div>
    <span class="px-1">100%</span>
    <button class="btn" aria-label="Zoom out"><svg width="17" height="17"><circle cx="8.500" cy="8.500" r="7" fill="#dbe8fb" stroke="#4c6a98"/><path d="M5 8.500h7" stroke="#33507f" stroke-width="2"/></svg></button>
    <input type="range" class="zoomer" min="0" max="100" value="49" aria-label="Zoom">
    <button class="btn" aria-label="Zoom in"><svg width="17" height="17"><circle cx="8.500" cy="8.500" r="7" fill="#dbe8fb" stroke="#4c6a98"/><path d="M5 8.500h7M8.500 5v7" stroke="#33507f" stroke-width="2"/></svg></button>
  </div>
</div>

<footer class="taskbar d-flex justify-content-between">
  <div class="d-flex">
    <button class="btn launch start" aria-label="Start"><svg width="38" height="37"><circle cx="19" cy="18.500" r="17.500" fill="url(#winFill)" stroke="#7d9cb5"/><path d="M3 15C6-2 32-2 35 15 25 20 12 12 3 15z" fill="#fff" opacity=".28"/><path d="M11 10c3-1 5-1 7 1l-2 7c-2-2-4-2-7-1z" fill="#f0572a"/><path d="M20 11c3 2 5 2 8 1l-2 7c-3 1-5 1-8-1z" fill="#8cc63e"/><path d="M9 19c3-1 5-1 7 1l-2 7c-2-2-4-2-7-1z" fill="#3d9fe6"/><path d="M17 20c3 2 5 2 8 1l-2 7c-3 1-5 1-8-1z" fill="#fcc520"/></svg></button>
    <button class="btn launch pinned ms-1" aria-label="Explorer"><svg width="34" height="32"><path d="M2 27V5l3-2h8l2 3h13l2 2v19z" fill="#e8c769" stroke="#a8853a" stroke-width=".7"/><path d="M5 5h25v6H5z" fill="#fffbe6" opacity=".8"/><path d="M6 3h4v3H6z" fill="#4aa04a"/><path d="M14 5h4v3h-4z" fill="#d8453c"/><path d="M22 7h4v3h-4z" fill="#3e8ed6"/><path d="M2 11l30-1v18H2z" fill="#f6dd8d" stroke="#b9964a" stroke-width=".7"/><path d="M6 31V22c0-3 2-4 5-4h13c3 0 4 1 4 4v9h-5v-7H11v7z" fill="#8fd0ef" stroke="#3e83ae"/></svg></button>
    <button class="btn launch pinned" aria-label="Internet Explorer"><svg width="34" height="32"><path d="M7 17C8 2 29 2 29 18H14c0 7 7 8 9 4h6C26 33 7 31 7 17z" fill="#4fc0f3" stroke="#1576b9" stroke-width=".7"/><path d="M14 14c1-6 8-6 8 0z" fill="#49331f"/><path d="M4 29C-3 22 18-1 30 2c3 1 2 5 0 8 1-3 1-5-1-5C20 4 1 21 6 27c2 2 5 1 8 0-4 4-8 4-10 2z" fill="#f9c426" stroke="#a77612" stroke-width=".6"/></svg></button>
    <button class="btn launch running" aria-label="Chrome"><svg width="30" height="30"><circle cx="15" cy="15" r="14" fill="#fccb1e"/><path d="M15 15L2.500 8.500A14 14 0 0 1 28 9.500H15z" fill="#e13b2e"/><path d="M2.500 8.500A14 14 0 0 0 14 29l6-10-5-4-5 2z" fill="#45a349"/><circle cx="15" cy="15" r="6.500" fill="#fff"/><circle cx="15" cy="15" r="5" fill="#3d7fdb"/></svg></button>
    <button class="btn launch running" aria-label="Installer"><svg width="34" height="32"><path d="M3 7c9-2 18-3 28-3l1 19c-9 1-18 4-27 4z" fill="#ef6724"/><path d="M5 7c3-3 5-2 6 1l1 3c0-5 4-7 6-2l1 2c0-5 4-7 5-2l1 2c0-6 4-6 5-2v7c-2 1-4 1-5-1-2 3-4 2-6 0-2 3-5 3-7 0-2 4-7 3-8-1z" fill="#fff"/><path d="M11.500 9v5M18.500 9v5M24.500 8v5" stroke="#ef6724" stroke-width="1.200"/><path d="M25 15c2 1 4 1 6 0v9c0 3-3 5-6 6-3-1-6-3-6-6v-9c2 1 4 1 6 0z" fill="#3f86d8" stroke="#e8eef5"/><path d="M25 15c2 1 4 1 6 0v8h-6zM25 23v7c-3-1-6-3-6-7z" fill="#f9cf35"/></svg></button>
    <button class="btn launch running" aria-label="Ribbon tool"><svg width="34" height="30"><g fill="none" stroke-width="6" stroke-linejoin="round"><path d="M17 12l-4-5H8l-4 7" stroke="#a4bf42"/><path d="M4 12l3 8 4 2" stroke="#f1cd3e"/><path d="M19 16l5 5h3l4-7" stroke="#f3b22f"/><path d="M23 6h4l4 8-3 5" stroke="#4d86d8"/><path d="M9 21l4-1 9-12 4-1" stroke="#e8502a" stroke-width="7"/></g><path d="M9 10l4 4-4 4-3-4zM25 10l4 4-4 3-3-3z" fill="#222"/><path d="M23.500 16.500h10v12h-10z" fill="#fff" stroke="#555"/><text x="25" y="27" font-family="Open Sans,sans-serif" font-size="11" fill="#111">9</text></svg></button>
    <button class="btn launch running front" aria-label="Excel"><svg width="34" height="34"><path d="M2 26V12C2 6 6 3 12 3h16v7H10v18z" fill="#c9e8bb" stroke="#4fa03e" stroke-width="1.500"/><path d="M6 8l26 3-2 21-25-3z" fill="#fff" stroke="#c8d8c2"/><path d="M9 11h5l3 4 3-4h4l-5 7 4 7h-5l-3-4-4 3H8l5-7z" fill="#1f7430"/><path d="M24 13h5v4h-5zM24 19h4v3h-4zM23 25h5v4h-5zM16 26h4v3h-4zM9 25h4v3H9z" fill="#67b04f"/></svg></button>
  </div>
  <div class="tray d-flex align-items-center">
    <svg width="9" height="6" class="me-1"><path d="M0 5h8L4 1z" fill="#fff"/></svg>
    <svg width="15" height="16"><path d="M1.500 2v13" stroke="#fff" stroke-width="1.500"/><path d="M2 2c3-1 4 2 7 1l5 0-1 5c-3 1-3-1-5 0s-4-1-6 0z" fill="#fff"/></svg>
    <svg width="16" height="16"><path d="M5.500 4.500h9v7h-9zM10 12v2M6 14.500h8M3 6v5h3M1.500 1v5h3V1M3 0v4" fill="none" stroke="#fff" stroke-width="1.400"/></svg>
    <svg width="16" height="16"><path d="M1 5h3l4-4v13l-4-4H1z" fill="#fff"/><circle cx="10.500" cy="10" r="4.500" fill="#d8261c" stroke="#fff"/><path d="M7.500 7l6 6" stroke="#fff" stroke-width="1.500"/></svg>
    <svg width="15" height="16"><path d="M1 2h6v12H1z" fill="#151008"/><path d="M1.500 2.500h5v12h-5zM3 1h3M10 1v4M13 1v4M11 9v5H8" fill="none" stroke="#fff" stroke-width="1.500"/><path d="M8 5h7v3c0 3-7 3-7 0z" fill="#fff"/><path d="M1 8l6 6M7 8l-6 6" stroke="#e01b14" stroke-width="2.500"/></svg>
    <div class="clock text-center">10:47 PM<br>16-Jan-13</div>
    <button class="btn peek" aria-label="Show desktop"></button>
  </div>
</footer>

<script src="https://cdn.jsdelivr.net/npm/bootstrap@5.3.0/dist/js/bootstrap.bundle.min.js"></script>
</body>
</html>
